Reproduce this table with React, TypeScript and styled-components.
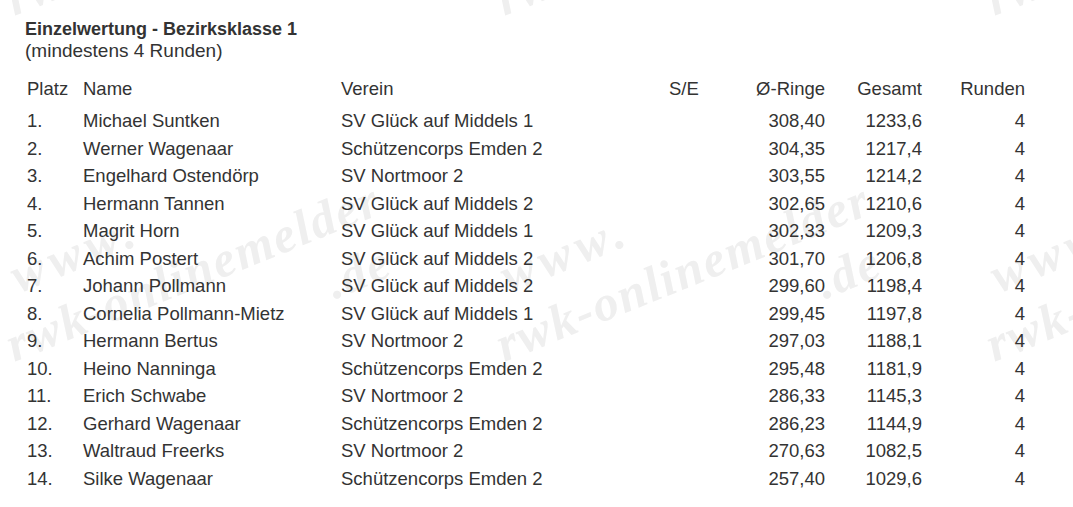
import styled, { createGlobalStyle } from 'styled-components';

type Result = {
  platz: number;
  name: string;
  verein: string;
  schnitt: string;
  gesamt: string;
  runden: number;
};

const results: Result[] = [
  { platz: 1, name: 'Michael Suntken', verein: 'SV Glück auf Middels 1', schnitt: '308,40', gesamt: '1233,6', runden: 4 },
  { platz: 2, name: 'Werner Wagenaar', verein: 'Schützencorps Emden 2', schnitt: '304,35', gesamt: '1217,4', runden: 4 },
  { platz: 3, name: 'Engelhard Ostendörp', verein: 'SV Nortmoor 2', schnitt: '303,55', gesamt: '1214,2', runden: 4 },
  { platz: 4, name: 'Hermann Tannen', verein: 'SV Glück auf Middels 2', schnitt: '302,65', gesamt: '1210,6', runden: 4 },
  { platz: 5, name: 'Magrit Horn', verein: 'SV Glück auf Middels 1', schnitt: '302,33', gesamt: '1209,3', runden: 4 },
  { platz: 6, name: 'Achim Postert', verein: 'SV Glück auf Middels 2', schnitt: '301,70', gesamt: '1206,8', runden: 4 },
  { platz: 7, name: 'Johann Pollmann', verein: 'SV Glück auf Middels 2', schnitt: '299,60', gesamt: '1198,4', runden: 4 },
  { platz: 8, name: 'Cornelia Pollmann-Mietz', verein: 'SV Glück auf Middels 1', schnitt: '299,45', gesamt: '1197,8', runden: 4 },
  { platz: 9, name: 'Hermann Bertus', verein: 'SV Nortmoor 2', schnitt: '297,03', gesamt: '1188,1', runden: 4 },
  { platz: 10, name: 'Heino Nanninga', verein: 'Schützencorps Emden 2', schnitt: '295,48', gesamt: '1181,9', runden: 4 },
  { platz: 11, name: 'Erich Schwabe', verein: 'SV Nortmoor 2', schnitt: '286,33', gesamt: '1145,3', runden: 4 },
  { platz: 12, name: 'Gerhard Wagenaar', verein: 'Schützencorps Emden 2', schnitt: '286,23', gesamt: '1144,9', runden: 4 },
  { platz: 13, name: 'Waltraud Freerks', verein: 'SV Nortmoor 2', schnitt: '270,63', gesamt: '1082,5', runden: 4 },
  { platz: 14, name: 'Silke Wagenaar', verein: 'Schützencorps Emden 2', schnitt: '257,40', gesamt: '1029,6', runden: 4 },
];

const GlobalStyle = createGlobalStyle`
  html, body {
    margin: 0;
    padding: 0;
    background: #ffffff;
  }
`;

const Page = styled.div`
  position: relative;
  min-height: 100vh;
  overflow: hidden;
  padding: 18px 0 0 25px;
  box-sizing: border-box;
  font-family: 'Liberation Sans', Arial, sans-serif;
  color: #333333;
`;

// background watermark, tiled over the whole page
const Watermark = styled.div`
  position: absolute;
  inset: 0;
  overflow: hidden;
  pointer-events: none;
  display: grid;
  grid-template-columns: repeat(3, 490px);
  grid-auto-rows: 346px;
`;

const MarkCell = styled.div`
  overflow: visible;
`;

const Mark = styled.div`
  transform: translate(-27px, -86px) rotate(-22deg);
  transform-origin: 0 0;
  font-family: 'Liberation Serif', 'DejaVu Serif', serif;
  font-style: italic;
  font-weight: bold;
  font-size: 50px;
  letter-spacing: 2px;
  line-height: 62px;
  color: #efefef;
  white-space: nowrap;
`;

const MarkLine = styled.div<{ $indent: number; $wide?: boolean }>`
  padding-left: ${(p) => p.$indent}px;
  letter-spacing: ${(p) => (p.$wide ? '6px' : 'inherit')};
`;

const Content = styled.div`
  position: relative;
`;

const Title = styled.h3`
  margin: 0;
  font-size: 18px;
  font-weight: bold;
  line-height: 22px;
`;

const Subtitle = styled.div`
  font-size: 19px;
  line-height: 21px;
`;

const Table = styled.div`
  margin: 14px 0 0 2px;
  font-size: 18.5px;
`;

const Row = styled.div<{ $head?: boolean }>`
  display: grid;
  grid-template-columns: 56px 258px 328px 66px 90px 97px 103px;
  height: 27.54px;
  line-height: 27.54px;
  margin-bottom: ${(p) => (p.$head ? '4.5px' : '0')};
  white-space: nowrap;
`;

const Cell = styled.div<{ $right?: boolean }>`
  text-align: ${(p) => (p.$right ? 'right' : 'left')};
`;

function WatermarkTile() {
  return (
    <MarkCell>
      <Mark>
        <MarkLine $indent={30} $wide>www.</MarkLine>
        <MarkLine $indent={0}>rwk-onlinemelder</MarkLine>
        <MarkLine $indent={320}>.de</MarkLine>
      </Mark>
    </MarkCell>
  );
}

function App() {
  return (
    <Page>
      <GlobalStyle />
      <Watermark>
        {Array.from({ length: 6 }).map((_, i) => (
          <WatermarkTile key={i} />
        ))}
      </Watermark>
      <Content>
        <Title>Einzelwertung - Bezirksklasse 1</Title>
        <Subtitle>(mindestens 4 Runden)</Subtitle>
        <Table>
          <Row $head>
            <Cell>Platz</Cell>
            <Cell>Name</Cell>
            <Cell>Verein</Cell>
            <Cell>S/E</Cell>
            <Cell $right>Ø-Ringe</Cell>
            <Cell $right>Gesamt</Cell>
            <Cell $right>Runden</Cell>
          </Row>
          {results.map((r) => (
            <Row key={r.platz}>
              <Cell>{r.platz}.</Cell>
              <Cell>{r.name}</Cell>
              <Cell>{r.verein}</Cell>
              <Cell></Cell>
              <Cell $right>{r.schnitt}</Cell>
              <Cell $right>{r.gesamt}</Cell>
              <Cell $right>{r.runden}</Cell>
            </Row>
          ))}
        </Table>
      </Content>
    </Page>
  );
}

export default App;
